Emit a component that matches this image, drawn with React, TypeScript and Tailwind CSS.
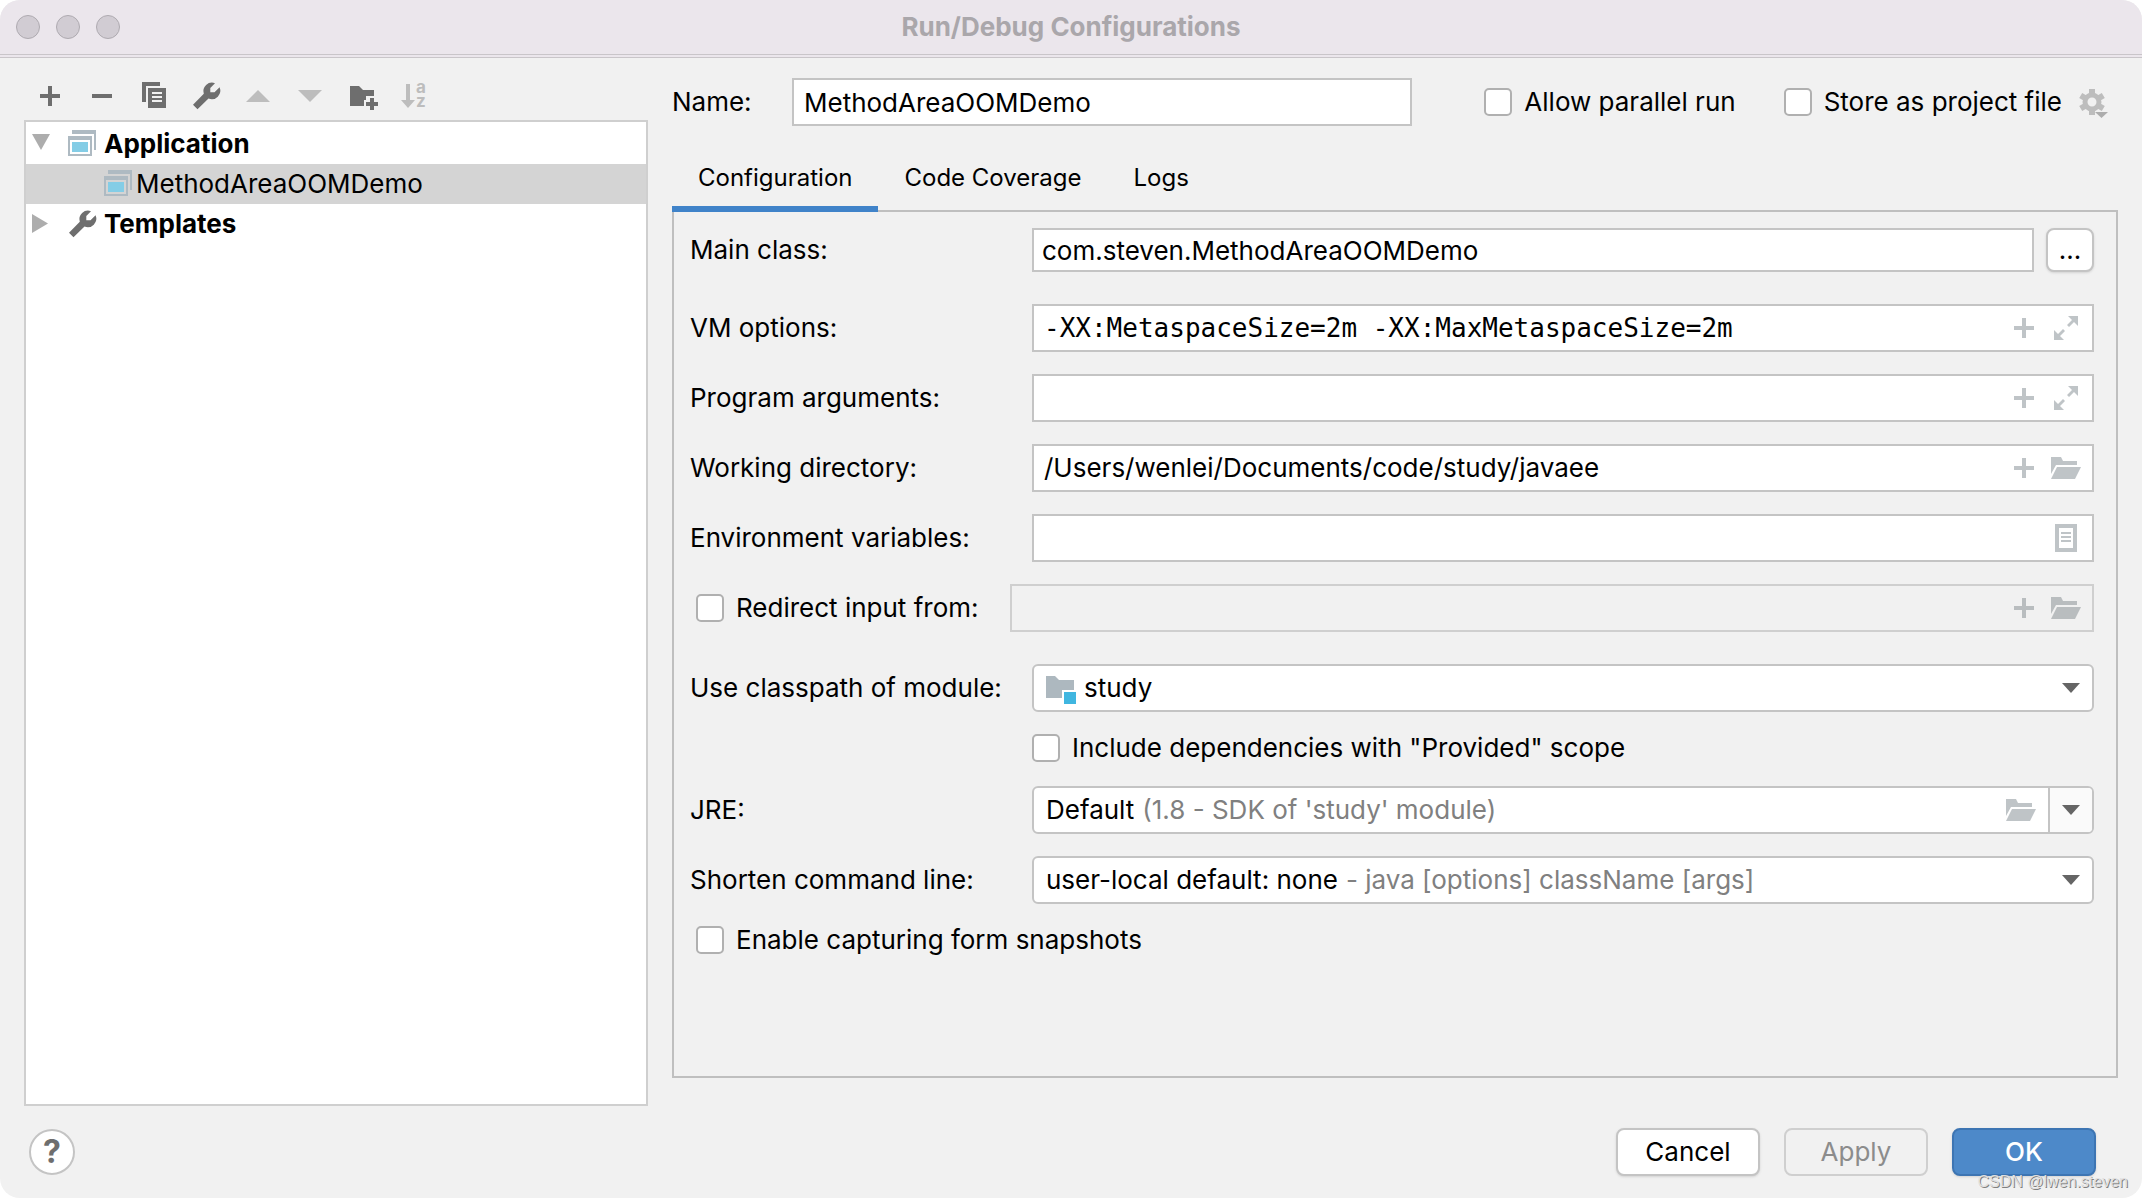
import React from 'react';
import clsx from 'clsx';

type IconProps = { className?: string };

const PlusIcon = () => (
  <svg viewBox="0 0 32 32" className="h-8 w-8" fill="currentColor" aria-hidden="true">
    <path d="M14 6h4v8h8v4h-8v8h-4v-8H6v-4h8z" />
  </svg>
);

const MinusIcon = () => (
  <svg viewBox="0 0 32 32" className="h-8 w-8" fill="currentColor" aria-hidden="true">
    <path d="M6 14h20v4H6z" />
  </svg>
);

const CopyIcon = () => (
  <svg viewBox="0 0 32 32" className="h-8 w-8" fill="currentColor" aria-hidden="true">
    <path d="M4 2h18v4H8v16H4z" />
    <path fillRule="evenodd" d="M10 8h18v20H10zM14 12v2h10v-2zM14 16v2h10v-2zM14 20v2h10v-2z" />
  </svg>
);

const WrenchIcon = ({ className }: IconProps) => (
  <svg viewBox="0 0 32 32" className={clsx('h-8 w-8', className)} fill="currentColor" aria-hidden="true">
    <path d="M25 3.2 20.3 8v4.200h4.200L29.600 7.300A8.600 8.600 0 0 1 18.500 18.600L7.500 29.300 3 24.800 13.800 13.800A8.600 8.600 0 0 1 25 3.200z" />
  </svg>
);

const FolderPlusIcon = () => (
  <svg viewBox="0 0 32 32" className="h-8 w-8" fill="currentColor" aria-hidden="true">
    <path d="M4 6h9l4 4h11v6h-8v4h-2v6H4z" />
    <path d="M24 18h4v4h4v4h-4v4h-4v-4h-4v-4h4z" />
  </svg>
);

const SortIcon = () => (
  <span className="flex h-8 w-8 items-start text-[17px] leading-[14px] font-bold">
    <svg viewBox="0 0 18 32" className="h-8 w-[18px] shrink-0" fill="currentColor" aria-hidden="true">
      <path d="M8 4h4v16h5l-7 8-7-8h5z" />
    </svg>
    <span className="flex flex-col">
      <span>a</span>
      <span>z</span>
    </span>
  </span>
);

const MoveArrow = ({ up }: { up?: boolean }) => (
  <svg viewBox="0 0 32 32" className="h-8 w-8" fill="currentColor" aria-hidden="true">
    <path d={up ? 'M4 22 16 10l12 12z' : 'M4 10h24L16 22z'} />
  </svg>
);

const TreeArrow = ({ open }: { open?: boolean }) => (
  <svg viewBox="0 0 20 20" className="mr-[14px] h-5 w-5 shrink-0" fill="#adadad" aria-hidden="true">
    <path d={open ? 'M0 0h18L9 16z' : 'M0 0l16 9.500-16 9.500z'} />
  </svg>
);

const ComboArrow = () => (
  <svg viewBox="0 0 18 10" className="h-[10px] w-[18px]" fill="#656565" aria-hidden="true">
    <path d="M0 0h18L9 10z" />
  </svg>
);

const AppIcon = () => (
  <svg viewBox="0 0 32 32" className="h-8 w-8 shrink-0" aria-hidden="true">
    <path d="M6 2h24v20h-2V6H6z" fill="#aebac2" />
    <path fillRule="evenodd" d="M2 8h24v20H2zM4 12v14h20V12z" fill="#aebac2" />
    <path d="M6 14h16v10H6z" fill="#84cde6" />
  </svg>
);

const ModuleIcon = () => (
  <svg viewBox="0 0 32 32" className="h-8 w-8 shrink-0" aria-hidden="true">
    <path d="M2 4h9l4 4h15v10H18v8H2z" fill="#adb8bf" />
    <path d="M20 20h12v12H20z" fill="#40b6e0" />
  </svg>
);

const ExpandIcon = () => (
  <svg viewBox="0 0 24 24" className="h-6 w-6" fill="currentColor" aria-hidden="true">
    <path d="M14 0h10v10l-4-4-5 5-2-2 5-5z" />
    <path d="M0 14l4 4 5-5 2 2-5 5 4 4H0z" />
  </svg>
);

const OpenFolderIcon = () => (
  <svg viewBox="0 0 30 22" className="h-[22px] w-[30px]" fill="currentColor" aria-hidden="true">
    <path d="M0 0h10l2 4h14v4H5L0 17z" />
    <path d="M6 10h24l-6 12H0z" />
  </svg>
);

const ListIcon = () => (
  <svg viewBox="0 0 22 28" className="h-7 w-[22px]" fill="currentColor" aria-hidden="true">
    <path fillRule="evenodd" d="M0 0h22v28H0zM4 4v20h14V4z" />
    <path d="M6 8h10v2H6zM6 12h10v2H6zM6 16h10v2H6z" />
  </svg>
);

const GearIcon = () => (
  <svg viewBox="0 0 32 32" className="h-8 w-8" fill="none" stroke="#bdbdbd" aria-hidden="true">
    <circle cx="14" cy="16" r="7" strokeWidth="5" />
    <path strokeWidth="6" d="M14 3v5M14 24v5M2.700 9.500 7 12M21 20l4.300 2.500M2.700 22.500 7 20M21 12l4.300-2.500" />
    <path d="M17 26h13l-6.500 6z" fill="#adadad" stroke="none" />
  </svg>
);

interface CheckProps {
  label: string;
  className?: string;
}

const Check = ({ label, className }: CheckProps) => (
  <label className={clsx('flex items-center gap-3 whitespace-nowrap', className)}>
    <input type="checkbox" className="h-7 w-7 shrink-0 appearance-none rounded-[5px] border-2 border-[#b0b0b0] bg-white" />
    {label}
  </label>
);

interface FieldProps {
  id: string;
  label: string;
  value?: string;
  mono?: boolean;
  children: React.ReactNode;
}

const Field = ({ id, label, value = '', mono, children }: FieldProps) => (
  <div className="mb-[22px] flex items-center">
    <label htmlFor={id} className="w-[342px] shrink-0">{label}</label>
    <div className="flex h-12 flex-1 items-center gap-[10px] border-2 border-[#c4c4c4] bg-white pr-[10px] text-[#bfc4c7]">
      <input
        id={id}
        defaultValue={value}
        className={clsx('min-w-0 flex-1 bg-transparent pl-[10px] text-black outline-none', mono && 'font-["DejaVu_Sans_Mono",monospace]')}
      />
      {children}
    </div>
  </div>
);

const IconButton = ({ label, children }: { label: string; children: React.ReactNode }) => (
  <button aria-label={label} className="flex h-8 w-8 shrink-0 items-center justify-center">{children}</button>
);

const TOOLS = [
  { label: 'Add', icon: <PlusIcon />, off: false },
  { label: 'Remove', icon: <MinusIcon />, off: false },
  { label: 'Copy', icon: <CopyIcon />, off: false },
  { label: 'Edit templates', icon: <WrenchIcon />, off: false },
  { label: 'Move up', icon: <MoveArrow up />, off: true },
  { label: 'Move down', icon: <MoveArrow />, off: true },
  { label: 'New folder', icon: <FolderPlusIcon />, off: false },
  { label: 'Sort', icon: <SortIcon />, off: true },
];

const TABS = ['Configuration', 'Code Coverage', 'Logs'];

const Sidebar = () => (
  <aside className="flex w-[624px] shrink-0 flex-col pt-[22px]">
    <div className="mb-2 flex gap-5 pl-[10px]">
      {TOOLS.map(t => (
        <button key={t.label} aria-label={t.label} disabled={t.off} className={t.off ? 'text-[#bdbdbd]' : 'text-[#6e6e6e]'}>
          {t.icon}
        </button>
      ))}
    </div>
    <ul role="tree" className="flex-1 border-2 border-[#cfcfcf] bg-white pt-[2px]">
      <li role="treeitem" className="flex h-10 items-center pl-[6px] font-bold">
        <TreeArrow open />
        <AppIcon />
        <span className="pl-[6px]">Application</span>
      </li>
      <li role="treeitem" aria-selected="true" className="flex h-10 items-center bg-[#d4d4d4] pl-[76px]">
        <AppIcon />
        <span className="pl-[2px]">MethodAreaOOMDemo</span>
      </li>
      <li role="treeitem" className="flex h-10 items-center pl-[6px] font-bold">
        <TreeArrow />
        <WrenchIcon className="text-[#6e6e6e]" />
        <span className="pl-[6px]">Templates</span>
      </li>
    </ul>
  </aside>
);

const ConfigurationPanel = () => (
  <div className="flex-1 border-2 border-[#bfbfbf] py-4 pr-[22px] pl-4">
    <div className="mb-8 flex items-center">
      <label htmlFor="main-class" className="w-[342px] shrink-0">Main class:</label>
      <input id="main-class" defaultValue="com.steven.MethodAreaOOMDemo" className="h-11 min-w-0 flex-1 border-2 border-[#c4c4c4] bg-white px-2 outline-none" />
      <button aria-label="Browse" className="ml-3 h-11 w-12 rounded-lg border-2 border-[#c4c4c4] bg-white leading-9 shadow-sm">...</button>
    </div>

    <Field id="vm" label="VM options:" value="-XX:MetaspaceSize=2m -XX:MaxMetaspaceSize=2m" mono>
      <IconButton label="Insert macro"><PlusIcon /></IconButton>
      <IconButton label="Expand"><ExpandIcon /></IconButton>
    </Field>
    <Field id="args" label="Program arguments:">
      <IconButton label="Insert macro"><PlusIcon /></IconButton>
      <IconButton label="Expand"><ExpandIcon /></IconButton>
    </Field>
    <Field id="dir" label="Working directory:" value="/Users/wenlei/Documents/code/study/javaee">
      <IconButton label="Insert macro"><PlusIcon /></IconButton>
      <IconButton label="Browse"><OpenFolderIcon /></IconButton>
    </Field>
    <Field id="env" label="Environment variables:">
      <IconButton label="Edit variables"><ListIcon /></IconButton>
    </Field>

    <div className="mb-8 flex items-center">
      <Check label="Redirect input from:" className="w-[320px] shrink-0 pl-[6px]" />
      <div className="flex h-12 flex-1 items-center gap-[10px] border-2 border-[#cfcfcf] pr-[10px] text-[#b9bdbf]">
        <input aria-label="Redirect input from" disabled className="min-w-0 flex-1" />
        <IconButton label="Insert macro"><PlusIcon /></IconButton>
        <IconButton label="Browse"><OpenFolderIcon /></IconButton>
      </div>
    </div>

    <div className="mb-[22px] flex items-center">
      <label htmlFor="module" className="w-[342px] shrink-0">Use classpath of module:</label>
      <div className="flex h-12 flex-1 items-center rounded-md border-2 border-[#c4c4c4] bg-white pr-3 pl-[10px]">
        <ModuleIcon />
        <select id="module" className="flex-1 appearance-none pl-2 outline-none">
          <option>study</option>
        </select>
        <ComboArrow />
      </div>
    </div>

    <Check label={'Include dependencies with "Provided" scope'} className="mb-6 h-7 pl-[342px]" />

    <div className="mb-[22px] flex items-center">
      <label htmlFor="jre" className="w-[342px] shrink-0">JRE:</label>
      <div className="flex h-12 flex-1 items-center overflow-hidden rounded-md border-2 border-[#c4c4c4] bg-white pl-3">
        <select id="jre" className="field-sizing-content appearance-none outline-none">
          <option>Default</option>
        </select>
        <span className="flex-1 pl-2 text-[#808080]">(1.8 - SDK of 'study' module)</span>
        <button aria-label="Browse JRE" className="mr-3 text-[#bfc4c7]"><OpenFolderIcon /></button>
        <button aria-label="Show JRE list" className="flex w-11 items-center justify-center self-stretch border-l-2 border-[#c4c4c4] bg-[#fafafa]">
          <ComboArrow />
        </button>
      </div>
    </div>

    <div className="mb-[22px] flex items-center">
      <label htmlFor="shorten" className="w-[342px] shrink-0">Shorten command line:</label>
      <div className="flex h-12 flex-1 items-center rounded-md border-2 border-[#c4c4c4] bg-white px-3">
        <select id="shorten" className="field-sizing-content appearance-none outline-none">
          <option>user-local default: none</option>
        </select>
        <span className="flex-1 pl-2 text-[#808080]">- java [options] className [args]</span>
        <ComboArrow />
      </div>
    </div>

    <Check label="Enable capturing form snapshots" className="h-7 pl-[6px]" />
  </div>
);

export default function App() {
  return (
    <div className="bg-white">
      <div className="relative flex min-h-screen flex-col overflow-hidden rounded-[20px] bg-[#f1f1f1] font-[Inter,'Liberation_Sans',sans-serif] text-[26px] leading-8 text-black">
        {/* Title bar */}
        <header className="flex h-[58px] shrink-0 items-center border-b-4 border-double border-[#c9c5c9] bg-[#ebe6ec] px-4">
          <div className="flex flex-1 gap-4">
            {['Close', 'Minimize', 'Zoom'].map(name => (
              <button key={name} aria-label={name} className="h-6 w-6 rounded-full border border-[#aeaab0] bg-[#d1ccd3]" />
            ))}
          </div>
          <h1 className="font-bold text-[#aaa7ab]">Run/Debug Configurations</h1>
          <div className="flex-1" />
        </header>

        <main className="flex flex-1 gap-6 px-6">
          <Sidebar />

          <section className="flex min-w-0 flex-1 flex-col pt-5 pb-7">
            <div className="flex items-center">
              <label htmlFor="name" className="w-[120px] shrink-0">Name:</label>
              <input id="name" defaultValue="MethodAreaOOMDemo" className="h-12 w-[620px] border-2 border-[#c4c4c4] bg-white px-[10px] outline-none" />
              <div className="flex flex-1 items-center justify-end pr-2">
                <Check label="Allow parallel run" className="mr-12" />
                <Check label="Store as project file" className="mr-4" />
                <button aria-label="Storage options"><GearIcon /></button>
              </div>
            </div>

            <div role="tablist" className="relative mt-6 -mb-[2px] flex text-2xl">
              {TABS.map((tab, i) => (
                <button
                  key={tab}
                  role="tab"
                  aria-selected={i === 0}
                  className={clsx('border-b-6 px-[26px] py-3 leading-8', i === 0 ? 'border-[#4083c9]' : 'border-transparent')}
                >
                  {tab}
                </button>
              ))}
            </div>
            <ConfigurationPanel />
          </section>
        </main>

        <footer className="flex items-center gap-6 pt-[22px] pr-[46px] pb-[22px] pl-[29px]">
          <button aria-label="Help" className="mr-auto h-[46px] w-[46px] rounded-full border-2 border-[#c4c4c4] bg-white text-[32px] font-bold text-[#6e6e6e]">?</button>
          <button className="h-12 w-36 rounded-lg border-2 border-[#c4c4c4] bg-white shadow-sm">Cancel</button>
          <button disabled className="h-12 w-36 rounded-lg border-2 border-[#cfcfcf] text-[#8c8c8c]">Apply</button>
          <button className="h-12 w-36 rounded-lg border-2 border-[#3d75b3] bg-[#4d89c9] font-medium text-white shadow-sm">OK</button>
        </footer>

        <span className="absolute right-[14px] bottom-1 font-['Liberation_Sans',sans-serif] text-base leading-6 text-[#e0e0e0] [text-shadow:1px_1px_0_#808080]">CSDN @lwen.steven</span>
      </div>
    </div>
  );
}
